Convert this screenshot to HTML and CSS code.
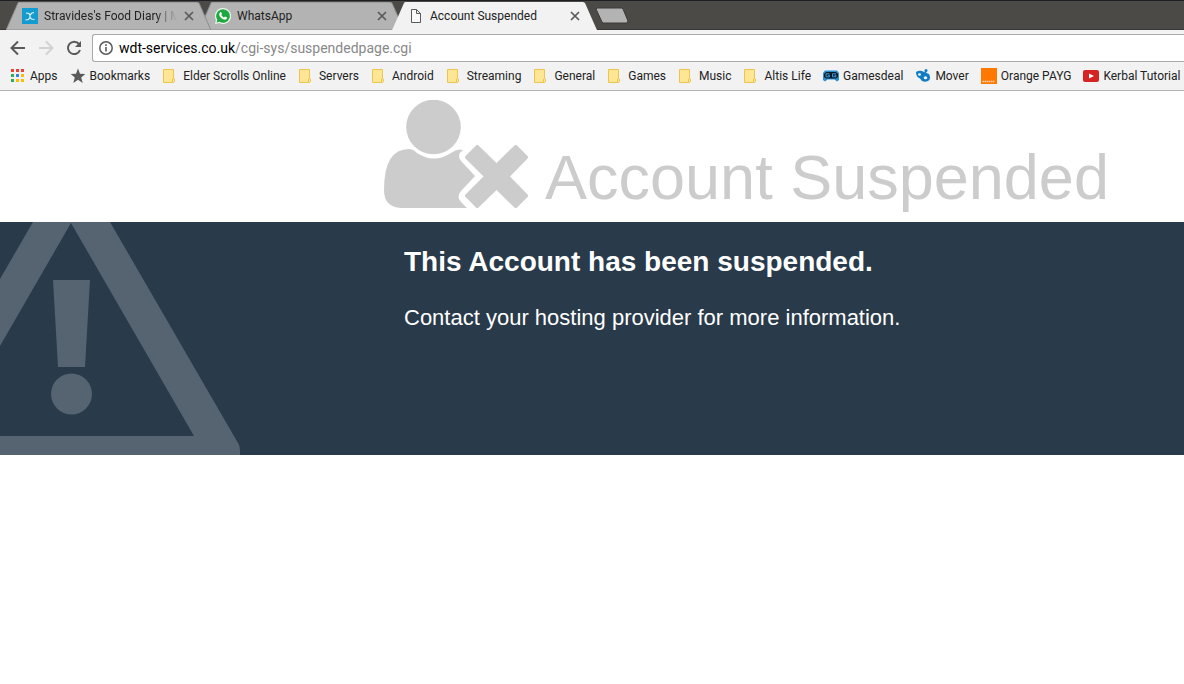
FILE: index.html
```
<!DOCTYPE html>
<html lang="en">
<head>
    <meta charset="UTF-8">
    <meta name="viewport" content="width=device-width, initial-scale=1.0">
    <title>Account Suspended</title>
    <link rel="stylesheet" href="styles.css">
</head>
<body>
    <svg class="defs" width="0" height="0" aria-hidden="true">
        <symbol id="tab-shape" viewBox="0 0 205 28">
            <path d="M0 28 L1 26 L12 1 L13 0 H191 L193 1 L204 26 L205 28 Z"/>
        </symbol>
        <symbol id="close" viewBox="0 0 12 12">
            <path d="M2 2 L10 10 M10 2 L2 10" fill="none" stroke="#5a5a5a" stroke-width="1.700"/>
        </symbol>
        <symbol id="folder" viewBox="0 0 16 16">
            <path d="M1.500 1.500 H11.500 V14.500 H1.500 Z" fill="#ffe694" stroke="#ecc550"/>
            <path d="M10.500 14.500 V11 Q11.500 9.500 12.500 11 V13.500 L11.500 14.500 Z" fill="#ffe694" stroke="#ecc550"/>
        </symbol>
    </svg>
    <div class="tabs">
        <div class="tab first">
            <svg class="tab-bg"><use href="#tab-shape"/></svg>
            <svg class="icon" viewBox="0 0 16 16">
                <rect width="16" height="16" fill="#149bcf"/>
                <path d="M4 5 L7 5.500 L8 7 L10 5 L12 4.500 M8 7 V9.500 M3.500 12 L6.500 11.500 L8 9.500 L9.500 11 L12.500 11.500" fill="none" stroke="#e4f3fa" stroke-width="1.200"/>
            </svg>
            <span class="tab-title fade">Stravides's Food Diary | M</span>
            <button class="tab-close" aria-label="Close tab"><svg><use href="#close"/></svg></button>
        </div>
        <div class="tab">
            <svg class="tab-bg"><use href="#tab-shape"/></svg>
            <svg class="icon" viewBox="0 0 16 16">
                <path d="M8 0 A8 8 0 1 1 4.200 15 L0 16 L1 12 A8 8 0 0 1 8 0" fill="#e9f5ec"/>
                <path d="M8 1.200 A6.800 6.800 0 1 1 4.500 13.800 L1.700 14.400 L2.300 11.700 A6.800 6.800 0 0 1 8 1.200" fill="#1fa83d"/>
                <path d="M5 4.200 C6 3.700 6.500 4.500 7 6 L6.300 7 C7 8.300 8 9 9 9.500 L10 8.600 L12 9.600 C12 11.500 10.500 12 9 11.600 C6.500 10.800 4 8 4.200 6 Z" fill="#fff"/>
            </svg>
            <span class="tab-title">WhatsApp</span>
            <button class="tab-close" aria-label="Close tab"><svg><use href="#close"/></svg></button>
        </div>
        <div class="tab active">
            <svg class="tab-bg"><use href="#tab-shape"/></svg>
            <svg class="icon" viewBox="0 0 16 16">
                <path d="M3.500 1.500 H8.500 L12.500 5.500 V14.500 H3.500 Z M8.500 1.500 V5.500 H12.500" fill="#fafafa" stroke="#5a5a5a"/>
            </svg>
            <span class="tab-title">Account Suspended</span>
            <button class="tab-close" aria-label="Close tab"><svg><use href="#close"/></svg></button>
        </div>
        <button class="new-tab" aria-label="New tab">
            <svg viewBox="0 0 34 17"><path d="M2 1 H27 L28 2 L33 14 L32 16 H8 L7 15 L1 2 Z" fill="#b3b3b3" stroke="#3a3937"/></svg>
        </button>
    </div>
    <div class="toolbar">
        <button class="nav" aria-label="Back">
            <svg viewBox="0 0 16 16"><path d="M15 8 H2 M8 1.500 L1.500 8 L8 14.500" fill="none" stroke="#5a5a5a" stroke-width="2"/></svg>
        </button>
        <button class="nav" aria-label="Forward" disabled>
            <svg viewBox="0 0 16 16"><path d="M1 8 H14 M8 1.500 L14.500 8 L8 14.500" fill="none" stroke="#d2d2d2" stroke-width="2"/></svg>
        </button>
        <button class="nav" aria-label="Reload">
            <svg viewBox="0 0 16 16"><path d="M13 4 A6.200 6.200 0 1 0 14 10" fill="none" stroke="#5a5a5a" stroke-width="2"/><path d="M15 1 V7 H9 Z" fill="#5a5a5a"/></svg>
        </button>
        <div class="address">
            <svg class="info" viewBox="0 0 14 14"><circle cx="7" cy="7" r="6.200" fill="none" stroke="#5a5a5a" stroke-width="1.500"/><path d="M6.200 6 H7.800 V10.500 H6.200 Z M6.200 3.300 H7.800 V4.900 H6.200 Z" fill="#5a5a5a"/></svg>
            <a href="#">wdt-services.co.uk<span>/cgi-sys/suspendedpage.cgi</span></a>
        </div>
    </div>
    <div class="bookmarks">
        <a href="#">
            <svg class="icon" viewBox="0 0 16 16">
                <path d="M1 1 H4 V4 H1 Z M6 1 H9 V4 H6 Z M11 1 H14 V4 H11 Z" fill="#ea4335"/>
                <path d="M1 6 H4 V9 H1 Z M1 11 H4 V14 H1 Z" fill="#34a853"/>
                <path d="M6 6 H9 V9 H6 Z" fill="#2f87e8"/>
                <path d="M11 6 H14 V9 H11 Z M6 11 H9 V14 H6 Z M11 11 H14 V14 H11 Z" fill="#fbbc05"/>
            </svg>Apps</a>
        <a href="#">
            <svg class="icon" viewBox="0 0 16 16"><path d="M8 0.500 L10 5.800 L15.300 6 L11.200 9.400 L12.700 15 L8 11.800 L3.300 15 L4.800 9.400 L0.700 6 L6 5.800 Z" fill="#5a5a5a"/></svg>Bookmarks</a>
        <a href="#" class="folder"><svg class="icon"><use href="#folder"/></svg>Elder Scrolls Online</a>
        <a href="#" class="folder"><svg class="icon"><use href="#folder"/></svg>Servers</a>
        <a href="#" class="folder"><svg class="icon"><use href="#folder"/></svg>Android</a>
        <a href="#" class="folder"><svg class="icon"><use href="#folder"/></svg>Streaming</a>
        <a href="#" class="folder"><svg class="icon"><use href="#folder"/></svg>General</a>
        <a href="#" class="folder"><svg class="icon"><use href="#folder"/></svg>Games</a>
        <a href="#" class="folder"><svg class="icon"><use href="#folder"/></svg>Music</a>
        <a href="#" class="folder"><svg class="icon"><use href="#folder"/></svg>Altis Life</a>
        <a href="#">
            <svg class="icon" viewBox="0 0 16 16">
                <path d="M2 2.500 H14 L16 5 V12 L14 13.500 L11.500 11.500 H4.500 L2 13.500 L0 12 V5 Z" fill="#2b8fd0"/>
                <path d="M3 4 H13 L15 6 V9 L13 10.500 H3 L1 9 V6 Z" fill="#0a1b2a"/>
                <path d="M6.500 5.800 H3 V8.800 H6.500 V7.300 H5 M13 5.800 H9.500 V8.800 H13 V7.300 H11.500" fill="none" stroke="#3f9bd8"/>
            </svg>Gamesdeal</a>
        <a href="#">
            <svg class="icon" viewBox="0 0 16 16">
                <path d="M1 4 Q5 1.500 9 4 L14 6 Q16 9 14.500 12 Q11 15 7 13 L5 10.500 Q1 9 1 4" fill="#0f7cc4"/>
                <circle cx="11" cy="2.500" r="1.500" fill="#0f7cc4"/>
                <path d="M10.500 3 V6" stroke="#0f7cc4" stroke-width="1.500"/>
                <ellipse cx="4.500" cy="6.500" rx="1.500" ry="1.300" fill="#f2f2f2"/>
                <ellipse cx="10.500" cy="9.800" rx="1.800" ry="1.500" fill="#f2f2f2"/>
            </svg>Mover</a>
        <a href="#">
            <svg class="icon" viewBox="0 0 16 16"><rect width="16" height="16" fill="#ff7900"/><path d="M1.500 13.500 H14" stroke="#ffd3ab" stroke-width="1.500" stroke-dasharray="1.500 0.500"/></svg>Orange PAYG</a>
        <a href="#">
            <svg class="icon" viewBox="0 0 16 16"><rect y="2" width="16" height="12" rx="2" fill="#d62424"/><path d="M6 5.500 L11 8 L6 10.500 Z" fill="#fff"/></svg>Kerbal Tutorial</a>
    </div>
    <div class="header">
        <svg class="user" viewBox="0 0 144 108">
            <g fill="#ccc">
                <circle cx="49.500" cy="27" r="27.300"/>
                <path d="M25 49 Q29 49 33 53 Q50 64 67 53 Q73 48 79 50 Q72 55 77 61 L91 76 L77 91 Q72 97 77 102 L83 108 H17 Q0 107 0 90 Q0 49 25 49"/>
                <path d="M92.500 45 L94 45 L112.500 63 L131 45 L132.500 45 L144 56.500 V58 L126 76.500 L144 95 V96.500 L132.500 108 H131 L112.500 90 L94 108 H92.500 L81 96.500 V95 L99.500 76.500 L81 58 V56.500 Z"/>
            </g>
        </svg>
        <h1>Account Suspended</h1>
    </div>
    <div class="notice">
        <svg class="warning" viewBox="0 0 240 233">
            <g fill="#566370">
                <path d="M33 0 H110 L238 221 Q240 224 240 228 V233 H0 V214 H194 L71 1 L0 124 V57 Z"/>
                <path d="M53 58 H90 L85 145 H58 Z"/>
                <circle cx="71.500" cy="172" r="20.500"/>
            </g>
        </svg>
        <div class="message">
            <h2>This Account has been suspended.</h2>
            <p>Contact your hosting provider for more information.</p>
        </div>
    </div>
</body>
</html>
```
FILE: styles.css
```
* {
    margin: 0;
    padding: 0;
    box-sizing: border-box;
}
body {
    font-family: 'Liberation Sans', Arial, sans-serif;
    background: #fff;
    overflow-x: hidden;
}
a {
    color: inherit;
    text-decoration: none;
}
button {
    border: none;
    background: none;
    cursor: pointer;
}
svg {
    display: block;
    flex: none;
}
.defs {
    position: absolute;
}
.icon {
    width: 16px;
    height: 16px;
}
.tabs {
    display: flex;
    height: 30px;
    padding: 1px 0 0 6px;
    background: #4b4a47;
    border-top: 1px solid #1e1f22;
    box-shadow: inset 0 -1px #3a3937;
    font: 12px/16px Roboto, sans-serif;
    color: #222;
}
.tab {
    position: relative;
    display: flex;
    align-items: center;
    flex: none;
    width: 205px;
    height: 28px;
    margin-right: -12px;
    padding: 0 16px;
}
.tab.first {
    z-index: 1;
}
.tab.active {
    z-index: 2;
}
.tab-bg {
    position: absolute;
    top: 0;
    left: 0;
    width: 205px;
    height: 28px;
    fill: #b3b3b3;
    stroke: #8c8c8c;
}
.tab.active .tab-bg {
    fill: #f2f2f2;
    stroke: none;
}
.tab .icon,
.tab-title,
.tab-close {
    position: relative;
}
.tab-title {
    flex: 1;
    margin-left: 6px;
    white-space: nowrap;
}
.tab-title.fade {
    -webkit-mask-image: linear-gradient(to right, #000 112px, transparent 133px);
    mask-image: linear-gradient(to right, #000 112px, transparent 133px);
}
.tab-close svg {
    width: 12px;
    height: 12px;
}
.new-tab {
    margin: 5px 0 0 10px;
    height: 17px;
}
.new-tab svg {
    width: 34px;
    height: 17px;
}
.toolbar {
    display: flex;
    align-items: center;
    height: 32px;
    padding: 4px 0 0 10px;
    background: #f2f2f2;
}
.nav {
    width: 28px;
}
.nav svg {
    width: 16px;
    height: 16px;
}
.address {
    display: flex;
    align-items: center;
    flex: 1;
    height: 28px;
    margin-left: -2px;
    padding-left: 6px;
    background: #fff;
    border: 1px solid #a9a9a9;
    border-right: none;
    border-radius: 3px 0 0 3px;
    font: 14px/20px Roboto, sans-serif;
    color: #000;
}
.address span {
    color: #888;
}
.info {
    width: 14px;
    height: 14px;
    margin-right: 6px;
}
.bookmarks {
    display: flex;
    align-items: center;
    gap: 12px;
    height: 29px;
    padding-left: 10px;
    background: #f2f2f2;
    border-bottom: 1px solid #b3b3b3;
    font: 12px/16px Roboto, sans-serif;
    color: #222;
}
.bookmarks a {
    display: flex;
    align-items: center;
    gap: 4px;
    white-space: nowrap;
}
.bookmarks .folder {
    gap: 5px;
}
.header {
    display: flex;
    align-items: flex-end;
    height: 131px;
    padding: 0 0 14px 384px;
    color: #ccc;
}
.user {
    width: 144px;
    height: 108px;
}
.header h1 {
    margin-left: 17px;
    font-size: 63px;
    line-height: 61px;
    font-weight: normal;
    white-space: nowrap;
}
.notice {
    display: flex;
    background: #293a4a;
    color: #fff;
}
.warning {
    width: 240px;
    height: 233px;
}
.message {
    padding: 23px 20px 0 164px;
}
.message h2 {
    font-size: 28px;
    line-height: 34px;
}
.message p {
    margin-top: 26px;
    font-size: 22px;
    line-height: 26px;
}
```
